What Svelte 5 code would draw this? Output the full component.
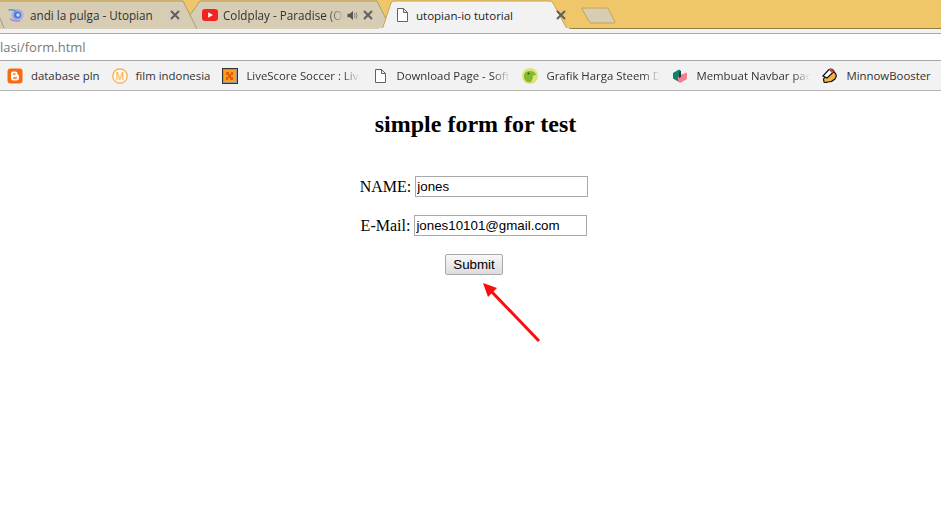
<script>
  const tabs = [
    { title: 'andi la pulga - Utopian', cls: 'tab-one', path: 'M0 29 L13 1 H197 L211 29 M14 18 L18 28' },
    { title: 'Coldplay - Paradise (Official Video)', cls: 'tab-two', path: 'M0 29 L20 1 H197 L211 29', sound: true },
    { title: 'utopian-io tutorial', cls: 'tab-active', path: 'M0 29 H1 Q3 29 4 27 L12 3 Q13 1 15 1 H171 Q173 1 174 3 L187 27 Q188 29 190 29 H193', active: true }
  ];
  const bookmarks = [
    { name: 'database pln', icon: 'blogger' },
    { name: 'film indonesia', icon: 'm' },
    { name: 'LiveScore Soccer : Live Scores', icon: 'live', cut: true },
    { name: 'Download Page - Software', icon: 'doc', cut: true },
    { name: 'Grafik Harga Steem Dollar', icon: 'lizard', cut: true },
    { name: 'Membuat Navbar pada Bootstrap', icon: 'cube', cut: true },
    { name: 'MinnowBooster', icon: 'minnow' }
  ];
</script>

{#snippet docIcon()}
  <svg class="ico" viewBox="0 0 16 16">
    <path d="M3.5 1.5 H9.5 L13.5 5.5 V14.5 H3.5 Z M9.5 1.5 V5.5 H13.5" fill="#fff" stroke="#5f6368" stroke-width="1" />
  </svg>
{/snippet}

<div class="tabstrip">
  {#each tabs as tab}
    <div class="tab {tab.cls}">
      <svg class="tab-bg" viewBox="0 0 {tab.active ? 193 : 211} 29" preserveAspectRatio="none">
        <path d="{tab.path}" fill={tab.active ? '#f2f2f2' : '#d6cdb4'} stroke={tab.active ? '#c9a24f' : '#a89a72'} stroke-width="1" />
      </svg>
      {#if tab.active}
        {@render docIcon()}
      {:else if tab.sound}
        <svg class="ico" viewBox="0 0 16 16">
          <rect x="0" y="2" width="16" height="12" rx="3" fill="#f4231f" />
          <path d="M6.2 5.2 L11 8 L6.2 10.8 Z" fill="#fff" />
        </svg>
      {:else}
        <svg class="ico" viewBox="0 0 16 16">
          <circle cx="9.5" cy="8" r="6" fill="#b9a7e0" />
          <circle cx="9.5" cy="8" r="3.6" fill="#3f7fd0" />
          <circle cx="10" cy="8" r="1.7" fill="#cfe0f5" />
          <path d="M0.5 3 Q5 2 8.5 4.5" fill="none" stroke="#4aa0d8" stroke-width="1.4" />
          <path d="M2 12 Q6 15 12 14" fill="none" stroke="#a77cc8" stroke-width="1.2" />
        </svg>
      {/if}
      <span class="tab-title">{tab.title}</span>
      {#if tab.sound}
        <svg class="speaker" viewBox="0 0 12 12">
          <path d="M0.5 4 H3 L6.5 1 V11 L3 8 H0.5 Z" fill="#555" />
          <path d="M8 3.5 Q9.5 6 8 8.5 M10 2.5 Q11.8 6 10 9.5" fill="none" stroke="#777" stroke-width="1" />
        </svg>
      {/if}
      <svg class="close" viewBox="0 0 10 10">
        <path d="M1 1 L9 9 M9 1 L1 9" stroke="#5f5f5f" stroke-width="2" />
      </svg>
    </div>
  {/each}
  <svg class="newtab" viewBox="0 0 35 17">
    <path d="M1 1 H26 Q27 1 27.5 2 L34 15 Q34.5 16 33 16 H10 Q9 16 8.5 15 L1 2 Q0.5 1 1 1 Z" fill="#d6cdb4" stroke="#c9a24f" />
  </svg>
</div>
<div class="tabfoot"></div>

<div class="addressbar">lasi/form.html</div>

<div class="bookmarks">
  {#each bookmarks as b}
    <div class="bookmark">
      {#if b.icon === 'blogger'}
        <svg class="ico" viewBox="0 0 16 16">
          <rect x="0.5" y="0.5" width="15" height="15" rx="3" fill="#f96a0e" />
          <path d="M6 3.5 H8.5 Q10.5 3.5 10.5 5.5 V6.5 Q12 6.5 12 8 V10 Q12 12.5 9.5 12.5 H6.5 Q4 12.5 4 10 V5.5 Q4 3.5 6 3.5 Z" fill="#fff" />
          <path d="M6.2 6 H8.4 M6.2 10 H9.8" stroke="#f96a0e" stroke-width="1.3" />
        </svg>
      {:else if b.icon === 'm'}
        <svg class="ico" viewBox="0 0 16 16">
          <circle cx="8" cy="8" r="7.2" fill="#fff8ee" stroke="#f5a94a" stroke-width="1.2" />
          <text x="8" y="11.5" text-anchor="middle" font-size="10" font-family="Liberation Sans, sans-serif" fill="#f5a94a">M</text>
        </svg>
      {:else if b.icon === 'live'}
        <svg class="ico" viewBox="0 0 16 16">
          <rect x="0.5" y="0.5" width="15" height="15" fill="#f7a01d" stroke="#333" />
          <rect x="1.5" y="1.5" width="13" height="13" fill="none" stroke="#999" />
          <path d="M4 4 H7 V6 H9 V4 H11 V7 H9 V9 H11 V12 H8 V10 H6 V12 H4 V9 H6 V7 H4 Z" fill="#e8590c" />
        </svg>
      {:else if b.icon === 'doc'}
        {@render docIcon()}
      {:else if b.icon === 'lizard'}
        <svg class="ico" viewBox="0 0 16 16">
          <circle cx="8" cy="8" r="8" fill="#dfe27a" />
          <path d="M2 7 Q3 3 8 3 Q13 3 14 7 L11 7.5 Q11 11 9 14 Q5 15 3 12 Q1.5 10 2 7 Z" fill="#7fbb2c" />
          <circle cx="6.5" cy="5.5" r="1" fill="#35501a" />
        </svg>
      {:else if b.icon === 'cube'}
        <svg class="ico" viewBox="0 0 16 16">
          <path d="M1 5 L7 1.5 L9 3 V10 L7 14 L1 10.5 Z" fill="#12806f" />
          <path d="M8 7 L15 4.5 V11 L8 15 L6 13.5 V9 Z" fill="#f07f8f" />
          <path d="M7 4 L9 3 V9 L7 10 Z" fill="#173d38" />
        </svg>
      {:else}
        <svg class="ico" viewBox="0 0 16 16">
          <path d="M6 14 Q3 15 2 14 L1.5 11 Q8 2 12 4 Q16 7 13 11 Q10 14 6 14 Z" fill="#f0b34a" stroke="#111" stroke-width="1.2" />
          <path d="M1 8 L7 1.5 Q9 0.5 11 2 L12 3.5 L5 10 Z" fill="#fff" stroke="#111" stroke-width="1.2" />
          <path d="M7 1.5 Q9 0.5 11 2 L12 3.5 L10 5 L7.5 2.5 Z" fill="#d93a3a" />
        </svg>
      {/if}
      <span class="bookmark-name" class:cut={b.cut}>{b.name}</span>
    </div>
  {/each}
</div>

<main class="page">
  <h2>simple form for test</h2>
  <form>
    <p>NAME: <input type="text" value="jones" /></p>
    <p>E-Mail: <input type="text" value="jones10101@gmail.com" /></p>
    <button type="button">Submit</button>
  </form>
</main>

<!-- red marker drawn over the page, pointing at the button -->
<svg class="pointer" width="70" height="70" viewBox="0 0 70 70">
  <path d="M56 58 L8 8" stroke="#fb0d0d" stroke-width="3" fill="none" />
  <path d="M0 0 L14 5 L5 14 Z" fill="#fb0d0d" />
</svg>

<style>
  :global(body) {
    background: #fff;
  }

  .tabstrip {
    display: flex;
    align-items: flex-start;
    height: 28px;
    background: #efc76a;
    border-bottom: 1px solid #8f7c44;
    position: relative;
  }

  .tab {
    position: relative;
    flex: none;
    display: flex;
    align-items: center;
    box-sizing: border-box;
    width: 211px;
    height: 29px;
    padding-top: 1px;
    font-family: "Open Sans", sans-serif;
    font-size: 11.7px;
    color: #333;
  }

  .tab-one {
    margin-left: -14px;
    padding-left: 22px;
    z-index: 3;
  }

  .tab-two {
    margin-left: -17px;
    padding-left: 22px;
    z-index: 2;
  }

  .tab-active {
    width: 193px;
    height: 33px;
    margin-left: -12px;
    padding: 0 0 3px 15px;
    z-index: 4;
    font-size: 11.5px;
    color: #222;
  }

  .tab-bg {
    position: absolute;
    left: 0;
    top: 0;
    width: 100%;
    height: 29px;
    z-index: -1;
  }

  .tab-active::after {
    content: "";
    position: absolute;
    left: 0;
    right: 3px;
    top: 28px;
    height: 5px;
    background: #f2f2f2;
    z-index: -1;
  }

  .ico {
    flex: none;
    width: 16px;
    height: 16px;
  }

  .tab-title {
    flex: none;
    margin-left: 6px;
    width: 124px;
    white-space: nowrap;
    overflow: hidden;
  }

  .tab-two .tab-title {
    margin-left: 5px;
    width: 122px;
    -webkit-mask-image: linear-gradient(to right, #000 85%, transparent);
    mask-image: linear-gradient(to right, #000 85%, transparent);
  }

  .tab-active .tab-title {
    width: 133px;
  }

  .speaker {
    flex: none;
    width: 11px;
    height: 11px;
    margin-left: 2px;
  }

  .close {
    flex: none;
    width: 10px;
    height: 10px;
    margin-left: 16px;
  }

  .tab-two .close {
    margin-left: 5px;
  }

  .tab-active .close {
    margin-left: 7px;
  }

  .newtab {
    flex: none;
    width: 35px;
    height: 17px;
    margin: 7px 0 0 9px;
    z-index: 1;
  }

  .tabfoot {
    height: 4px;
    background: #f2f2f2;
    border-bottom: 1px solid #a8a8a8;
  }

  .addressbar {
    height: 26px;
    line-height: 26px;
    background: #fff;
    border-bottom: 1px solid #a8a8a8;
    font-family: "Open Sans", sans-serif;
    font-size: 13px;
    color: #7a7a7a;
  }

  .bookmarks {
    display: flex;
    align-items: center;
    height: 29px;
    padding-left: 7px;
    background: #f2f2f2;
    border-bottom: 1px solid #b4b4b4;
    font-family: "Open Sans", sans-serif;
    font-size: 11.4px;
    color: #333;
    white-space: nowrap;
  }

  .bookmark {
    flex: none;
    display: flex;
    align-items: center;
    gap: 8px;
    margin-right: 12px;
  }

  .bookmark-name.cut {
    width: 114px;
    overflow: hidden;
    -webkit-mask-image: linear-gradient(to right, #000 85%, transparent);
    mask-image: linear-gradient(to right, #000 85%, transparent);
  }

  .page {
    padding-left: 7px;
    text-align: center;
    font-family: "Liberation Serif", serif;
    font-size: 16px;
    color: #000;
  }

  h2 {
    margin: 0;
    padding: 20px 0 0 3px;
    font-size: 24px;
    line-height: 27px;
  }

  form {
    margin-top: 38px;
  }

  p {
    margin: 0 0 18px;
    line-height: 21px;
  }

  input {
    width: 173px;
    height: 21px;
    box-sizing: border-box;
    padding: 1px;
    border: 1px solid #a9a9a9;
    font-family: "Liberation Sans", sans-serif;
    font-size: 13.33px;
    color: #000;
    vertical-align: top;
  }

  button {
    width: 58px;
    height: 21px;
    padding: 0;
    border: 1px solid #a9a9a9;
    border-radius: 2px;
    background: linear-gradient(#f8f8f8, #dcdcdc);
    font-family: "Liberation Sans", sans-serif;
    font-size: 13.33px;
    color: #000;
  }

  .pointer {
    position: absolute;
    left: 483px;
    top: 283px;
  }
</style>
